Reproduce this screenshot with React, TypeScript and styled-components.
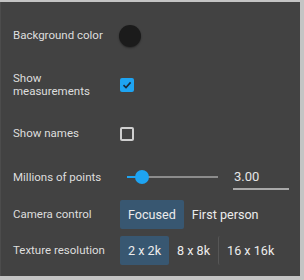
import styled, { createGlobalStyle } from "styled-components";

const GlobalStyle = createGlobalStyle`
  html, body {
    margin: 0;
    padding: 0;
    background: #c4c4c4;
  }
  body {
    font-family: Roboto, "Liberation Sans", sans-serif;
  }
`;

const Frame = styled.div`
  width: 304px;
  height: 280px;
  padding-top: 2px;
  box-sizing: border-box;
`;

const Panel = styled.div`
  width: 300px;
  height: 274px;
  box-sizing: border-box;
  background: #424242;
  border-left: 1px solid #4c4c4c;
  padding: 9px 0 0 12px;
  display: grid;
  grid-template-columns: 107px 1fr;
  align-content: start;
  color: #dedede;
`;

const Label = styled.div<{ $h: number }>`
  height: ${(p) => p.$h}px;
  display: flex;
  align-items: center;
  font-size: 11.5px;
  line-height: 13px;
`;

const Control = styled.div<{ $h: number }>`
  height: ${(p) => p.$h}px;
  display: flex;
  align-items: center;
`;

const Swatch = styled.div`
  width: 22px;
  height: 22px;
  border-radius: 50%;
  background: #1b1b1b;
  margin-left: -1px;
  box-shadow: 0 1px 2px rgba(0, 0, 0, 0.4);
`;

const Box = styled.div<{ $checked?: boolean }>`
  width: 14px;
  height: 14px;
  box-sizing: border-box;
  border-radius: 2px;
  border: 2px solid ${(p) => (p.$checked ? "#1ea4f2" : "#cfcfcf")};
  background: ${(p) => (p.$checked ? "#1ea4f2" : "transparent")};
  display: flex;
  align-items: center;
  justify-content: center;
`;

const Slider = styled.div`
  position: relative;
  width: 91px;
  height: 14px;
  margin-left: 7px;
`;

const Track = styled.div`
  position: absolute;
  left: 0;
  right: 0;
  top: 6px;
  height: 2px;
  background: #8c8c8c;
`;

const Fill = styled.div`
  position: absolute;
  left: 0;
  top: 6px;
  height: 2px;
  background: #1ea4f2;
`;

const Thumb = styled.div`
  position: absolute;
  top: 0;
  width: 14px;
  height: 14px;
  border-radius: 50%;
  background: #1ea4f2;
  transform: translateX(-7px);
`;

const NumberField = styled.div`
  margin-left: 15px;
  width: 56px;
  height: 26px;
  box-sizing: border-box;
  border-bottom: 2px solid #a9a9a9;
  font-size: 13px;
  display: flex;
  align-items: center;
  padding: 1px 0 0 1px;
  color: #e6e6e6;
`;

const Toggle = styled.div`
  display: flex;
  align-items: stretch;
  height: 29px;
`;

const ToggleButton = styled.div<{ $active?: boolean; $divider?: boolean }>`
  display: flex;
  align-items: center;
  padding: 0 8px;
  font-size: 12.6px;
  border-radius: 2px;
  color: #ececec;
  background: ${(p) => (p.$active ? "#385771" : "transparent")};
  border-left: ${(p) => (p.$divider ? "1px solid #565656" : "none")};
`;

const value = 3;
const min = 0.5;
const max = 16;

export default function App() {
  const pct = ((value - min) / (max - min)) * 100;
  const camera = ["Focused", "First person"];
  const textures = ["2 x 2k", "8 x 8k", "16 x 16k"];
  return (
    <>
      <GlobalStyle />
      <Frame>
        <Panel>
          <Label $h={49}>Background color</Label>
          <Control $h={49}>
            <Swatch />
          </Control>

          <Label $h={49}>
            Show
            <br />
            measurements
          </Label>
          <Control $h={49}>
            <Box $checked>
              <svg width="10" height="10" viewBox="0 0 10 10">
                <path d="M1.5 5.2 L4 7.6 L8.6 2.4" fill="none" stroke="#1a2a3a" strokeWidth="1.6" />
              </svg>
            </Box>
          </Control>

          <Label $h={49}>Show names</Label>
          <Control $h={49}>
            <Box />
          </Control>

          <Label $h={38}>Millions of points</Label>
          <Control $h={38}>
            <Slider>
              <Track />
              <Fill style={{ width: `${pct}%` }} />
              <Thumb style={{ left: `${pct}%` }} />
            </Slider>
            <NumberField>3.00</NumberField>
          </Control>

          <Label $h={36}>Camera control</Label>
          <Control $h={36}>
            <Toggle>
              {camera.map((c, i) => (
                <ToggleButton key={c} $active={i === 0}>
                  {c}
                </ToggleButton>
              ))}
            </Toggle>
          </Control>

          <Label $h={36}>Texture resolution</Label>
          <Control $h={36}>
            <Toggle>
              {textures.map((t, i) => (
                <ToggleButton key={t} $active={i === 0} $divider={i > 1}>
                  {t}
                </ToggleButton>
              ))}
            </Toggle>
          </Control>
        </Panel>
      </Frame>
    </>
  );
}
